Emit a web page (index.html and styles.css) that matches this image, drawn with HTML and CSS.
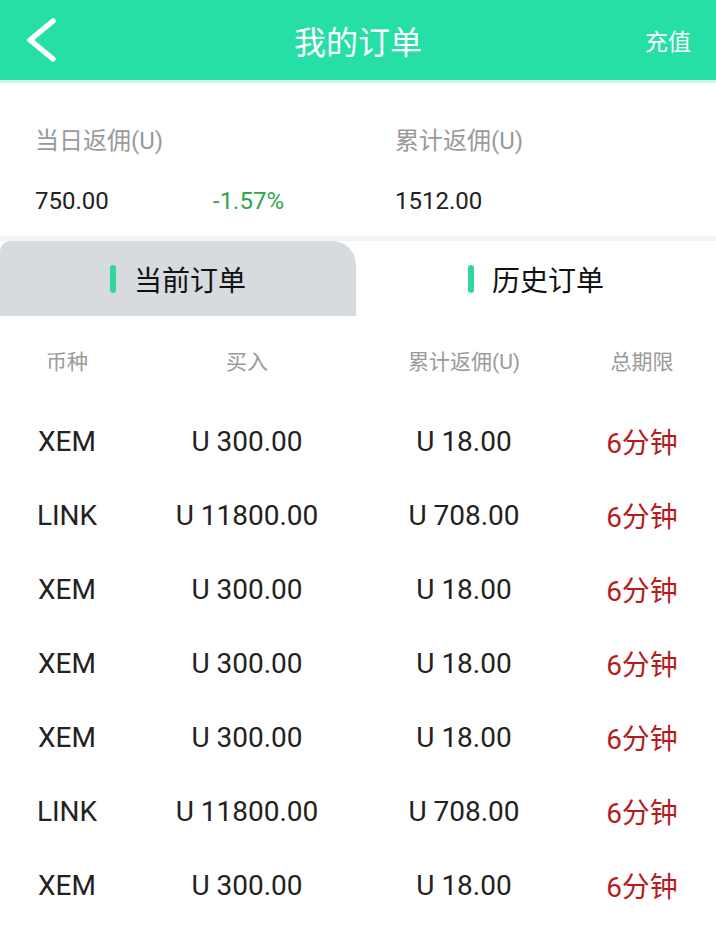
FILE: index.html
```html
<!DOCTYPE html>
<html lang="zh-CN">
<head>
  <meta charset="UTF-8" />
  <meta name="viewport" content="width=device-width, initial-scale=1.0"/>
  <title>我的订单</title>
  <link rel="stylesheet" href="styles.css">
</head>
<body>
  <div class="header">
    <a class="back" href="#">
      <svg width="40" height="50" viewBox="0 0 40 50">
        <polyline points="33,6 10,25 33,44" fill="none" stroke="#fff" stroke-width="5.5" stroke-linecap="round" stroke-linejoin="round"/>
      </svg>
    </a>
    <h1>我的订单</h1>
    <a class="recharge" href="#">充值</a>
  </div>

  <div class="summary">
    <div class="stat stat-day">
      <p class="label">当日返佣(U)</p>
      <div class="values">
        <span class="value">750.00</span>
        <span class="rate">-1.57%</span>
      </div>
    </div>
    <div class="stat">
      <p class="label">累计返佣(U)</p>
      <div class="values">
        <span class="value">1512.00</span>
      </div>
    </div>
  </div>

  <div class="tabs">
    <div class="tab active"><i class="mark"></i>当前订单</div>
    <div class="tab"><i class="mark"></i>历史订单</div>
  </div>

  <div class="orders">
    <div class="row head">
      <span>币种</span>
      <span>买入</span>
      <span>累计返佣(U)</span>
      <span>总期限</span>
    </div>
    <div class="row">
      <span>XEM</span><span>U 300.00</span><span>U 18.00</span><span class="term">6分钟</span>
    </div>
    <div class="row">
      <span>LINK</span><span>U 11800.00</span><span>U 708.00</span><span class="term">6分钟</span>
    </div>
    <div class="row">
      <span>XEM</span><span>U 300.00</span><span>U 18.00</span><span class="term">6分钟</span>
    </div>
    <div class="row">
      <span>XEM</span><span>U 300.00</span><span>U 18.00</span><span class="term">6分钟</span>
    </div>
    <div class="row">
      <span>XEM</span><span>U 300.00</span><span>U 18.00</span><span class="term">6分钟</span>
    </div>
    <div class="row">
      <span>LINK</span><span>U 11800.00</span><span>U 708.00</span><span class="term">6分钟</span>
    </div>
    <div class="row">
      <span>XEM</span><span>U 300.00</span><span>U 18.00</span><span class="term">6分钟</span>
    </div>
  </div>
</body>
</html>
```

FILE: styles.css
```css
body {
  margin: 0;
  font-family: Roboto, "Noto Sans CJK SC", sans-serif;
  background: #fff;
  color: #222;
  overflow: hidden;
}

.header {
  height: 80px;
  background: #26dfa6;
  border-bottom: 3px solid #cdf4e6;
  display: grid;
  grid-template-columns: 1fr auto 1fr;
  align-items: center;
}

.back {
  display: flex;
  padding-left: 20px;
}

.header h1 {
  margin: 0;
  font-size: 32px;
  font-weight: normal;
  color: #fff;
}

.recharge {
  justify-self: end;
  padding-right: 25px;
  font-size: 23px;
  color: #fff;
  text-decoration: none;
}

.summary {
  display: flex;
  padding: 43px 0 20px 35px;
  border-bottom: 5px solid #f3f4f6;
}

.stat-day {
  width: 360px;
}

.label {
  margin: 0 0 30px;
  font-size: 24px;
  line-height: 30px;
  color: #9a9a9a;
}

.values {
  display: flex;
  font-size: 24px;
  line-height: 30px;
}

.value {
  width: 178px;
}

.rate {
  color: #2fa54a;
}

.tabs {
  display: grid;
  grid-template-columns: 356px 1fr;
  height: 75px;
}

.tab {
  display: flex;
  align-items: center;
  justify-content: center;
  font-size: 28px;
  color: #111;
}

.tab.active {
  background: #d7dadf;
  border-radius: 10px 24px 0 0;
}

.mark {
  width: 6px;
  height: 28px;
  border-radius: 3px;
  background: #2fd89a;
  margin-right: 18px;
}

.row {
  display: grid;
  grid-template-columns: 134px 226px 208px 1fr;
  align-items: center;
  height: 74px;
  text-align: center;
  font-size: 28px;
  color: #222;
}

.row.head {
  height: 88px;
  font-size: 21px;
  color: #9a9a9a;
}

.term {
  color: #b71c1c;
}
```
